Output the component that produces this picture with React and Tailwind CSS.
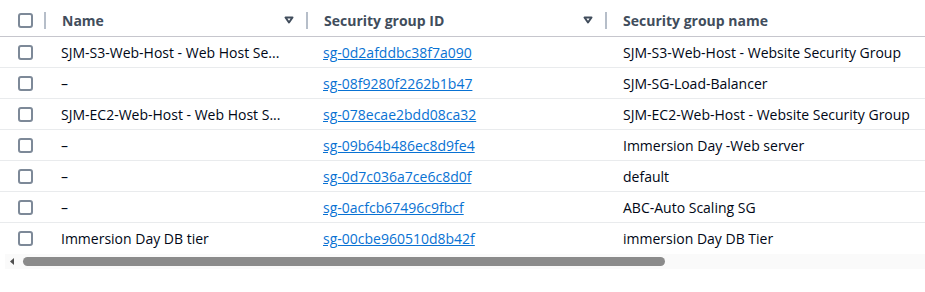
import React from 'react';

const rows = [
    { name: 'SJM-S3-Web-Host - Web Host Se...', id: 'sg-0d2afddbc38f7a090', group: 'SJM-S3-Web-Host - Website Security Group' },
    { name: '–', id: 'sg-08f9280f2262b1b47', group: 'SJM-SG-Load-Balancer' },
    { name: 'SJM-EC2-Web-Host - Web Host S...', id: 'sg-078ecae2bdd08ca32', group: 'SJM-EC2-Web-Host - Website Security Group' },
    { name: '–', id: 'sg-09b64b486ec8d9fe4', group: 'Immersion Day -Web server' },
    { name: '–', id: 'sg-0d7c036a7ce6c8d0f', group: 'default' },
    { name: '–', id: 'sg-0acfcb67496c9fbcf', group: 'ABC-Auto Scaling SG' },
    { name: 'Immersion Day DB tier', id: 'sg-00cbe960510d8b42f', group: 'immersion Day DB Tier' },
];

function Checkbox() {
    return <div className="w-[15px] h-[15px] border-2 border-[#7d8998] rounded-[3px] bg-white" />;
}

function SortIcon() {
    return (
        <svg width="10" height="8" viewBox="0 0 10 8">
            <path d="M1.5 1.5 H8.5 L5 6.5 Z" fill="none" stroke="#414d5c" strokeWidth="2" strokeLinejoin="round" />
        </svg>
    );
}

function Divider() {
    return <div className="w-[2px] h-[17px] bg-[#b6bec9]" />;
}

export default function App() {
    return (
        <div className="w-[925px] h-[292px] bg-white overflow-hidden text-[14px] text-[#000716]" style={{ fontFamily: '"Open Sans", "Noto Sans", sans-serif' }}>
            <div className="flex items-center h-[37px] pt-[4px] border-b border-[#c6c6cd] font-bold text-[#414d5c]">
                <div className="w-[44px] pl-[18px] flex items-center"><Checkbox /></div>
                <Divider />
                <div className="w-[260px] pl-[16px] pr-[12px] flex items-center justify-between">
                    <span>Name</span>
                    <SortIcon />
                </div>
                <Divider />
                <div className="w-[297px] pl-[16px] pr-[12px] flex items-center justify-between">
                    <span>Security group ID</span>
                    <SortIcon />
                </div>
                <Divider />
                <div className="pl-[16px]">Security group name</div>
            </div>
            {rows.map((r, i) => (
                <div key={i} className={`flex items-center h-[31px] ${i < rows.length - 1 ? 'border-b border-[#e9ebed]' : ''}`}>
                    <div className="w-[46px] pl-[18px] flex items-center"><Checkbox /></div>
                    <div className="w-[262px] pl-[15px] whitespace-nowrap">{r.name}</div>
                    <div className="w-[299px] pl-[15px]">
                        <a href="#" className="text-[#0972d3] underline whitespace-nowrap">{r.id}</a>
                    </div>
                    <div className="pl-[16px] whitespace-nowrap">{r.group}</div>
                </div>
            ))}
            <div className="ml-[5px] h-[15px] bg-[#fafafa] flex items-center">
                <svg width="18" height="15" viewBox="0 0 18 15" className="shrink-0">
                    <path d="M9 4 L5 7.5 L9 11 Z" fill="#505050" />
                </svg>
                <div className="w-[642px] h-[9px] rounded-full bg-[#8b8b8b]" />
            </div>
        </div>
    );
}
